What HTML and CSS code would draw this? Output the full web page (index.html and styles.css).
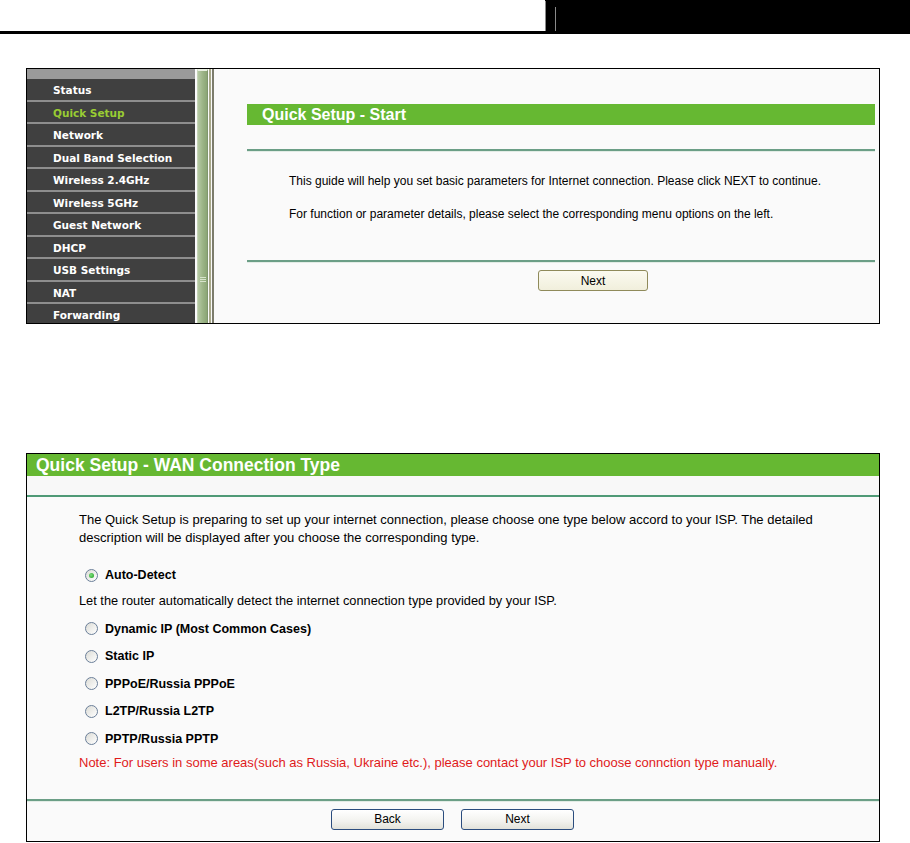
FILE: index.html
```html
<!DOCTYPE html>
<html lang="en">
<head>
    <meta charset="UTF-8">
    <title>Quick Setup</title>
    <link rel="stylesheet" href="styles.css">
</head>
<body>
    <div class="topbar">
        <div class="topbar-left"></div>
        <div class="topbar-right">
            <span class="tick tick-a"></span>
            <span class="tick tick-b"></span>
        </div>
    </div>

    <!-- screenshot 1: router web page -->
    <div class="frame frame-start">
        <ul class="menu">
            <li class="menu-top"></li>
            <li>Status</li>
            <li class="active">Quick Setup</li>
            <li>Network</li>
            <li>Dual Band Selection</li>
            <li>Wireless 2.4GHz</li>
            <li>Wireless 5GHz</li>
            <li>Guest Network</li>
            <li>DHCP</li>
            <li>USB Settings</li>
            <li>NAT</li>
            <li>Forwarding</li>
        </ul>
        <div class="scroll">
            <div class="scroll-thumb"><span class="grip"></span></div>
        </div>
        <div class="divider"></div>
        <div class="page">
            <div class="title-bar">Quick Setup - Start</div>
            <div class="rule rule-top"></div>
            <p class="guide first">This guide will help you set basic parameters for Internet connection. Please click NEXT to continue.</p>
            <p class="guide">For function or parameter details, please select the corresponding menu options on the left.</p>
            <div class="rule rule-bottom"></div>
            <div class="start-actions">
                <button class="btn btn-olive">Next</button>
            </div>
        </div>
    </div>

    <!-- screenshot 2: WAN connection type -->
    <div class="frame frame-wan">
        <div class="wan-title">Quick Setup - WAN Connection Type</div>
        <div class="wan-band"></div>
        <div class="wan-body">
            <p class="intro">The Quick Setup is preparing to set up your internet connection, please choose one type below accord to your ISP. The detailed description will be displayed after you choose the corresponding type.</p>
            <label class="opt first"><span class="radio checked"></span>Auto-Detect</label>
            <p class="hint">Let the router automatically detect the internet connection type provided by your ISP.</p>
            <label class="opt"><span class="radio"></span>Dynamic IP (Most Common Cases)</label>
            <label class="opt"><span class="radio"></span>Static IP</label>
            <label class="opt"><span class="radio"></span>PPPoE/Russia PPPoE</label>
            <label class="opt"><span class="radio"></span>L2TP/Russia L2TP</label>
            <label class="opt"><span class="radio"></span>PPTP/Russia PPTP</label>
            <p class="note">Note: For users in some areas(such as Russia, Ukraine etc.), please contact your ISP to choose connction type manually.</p>
        </div>
        <div class="rule rule-wan"></div>
        <div class="wan-actions">
            <button class="btn btn-blue">Back</button>
            <button class="btn btn-blue">Next</button>
        </div>
    </div>
</body>
</html>
```

FILE: styles.css
```css
body {
    margin: 0;
    background: #fff;
    font-family: "Liberation Sans", Arial, sans-serif;
    color: #000;
}

/* top bar */
.topbar {
    display: flex;
    height: 34px;
}
.topbar-left {
    flex: 1;
    border-bottom: 3px solid #000;
}
.topbar-right {
    width: 365px;
    background: #000;
    position: relative;
}
.tick {
    position: absolute;
    width: 1px;
    background: #8a8a8a;
    bottom: 3px;
}
.tick-a { left: 0; top: 1px; }
.tick-b { left: 10px; top: 7px; }

/* frames */
.frame {
    margin-left: 26px;
    width: 852px;
    border: 1px solid #000;
    background: #fafafa;
}
.frame-start {
    margin-top: 34px;
    height: 254px;
    display: flex;
    overflow: hidden;
}
.frame-wan {
    margin-top: 129px;
    height: 387px;
}

/* menu */
.menu {
    list-style: none;
    margin: 0;
    padding: 0;
    width: 168px;
    background: #404040;
    flex-shrink: 0;
}
.menu li {
    height: 20.5px;
    line-height: 22px;
    border-bottom: 2px solid #8e8e8e;
    padding-left: 26px;
    color: #fff;
    font-family: "DejaVu Sans", Verdana, sans-serif;
    font-weight: bold;
    font-size: 10.5px;
    white-space: nowrap;
}
.menu li.menu-top {
    height: 10px;
    border: none;
    background: #9a9a9a;
}
.menu li.active {
    color: #99cc33;
}

.scroll {
    width: 11px;
    margin-left: 2px;
    background: #fafafa;
    flex-shrink: 0;
}
.scroll-thumb {
    height: 100%;
    box-sizing: border-box;
    border-top: 2px solid #e8efe0;
    border-left: 1px solid #c5d4b8;
    border-right: 1px solid #7f966c;
    background: linear-gradient(to right, #b5c9a3, #9db588 50%, #8ba575);
    display: flex;
    align-items: flex-start;
    justify-content: center;
    padding-top: 206px;
}
.grip {
    width: 6px;
    height: 5px;
    background: repeating-linear-gradient(to bottom, #d8e4cc 0 1px, transparent 1px 2px);
}
.divider {
    width: 5px;
    margin-left: 1px;
    flex-shrink: 0;
    border-left: 2px solid #a9a98a;
    border-right: 2px solid #7c7c6c;
    box-sizing: border-box;
    background: #fafafa;
}

.page {
    flex: 1;
    padding: 35px 4px 0 33px;
}
.title-bar {
    height: 21px;
    line-height: 21px;
    background: #66b832;
    color: #fff;
    font-weight: bold;
    font-size: 16px;
    padding-left: 15px;
}
.rule {
    height: 1px;
    border-top: 2px solid #6b9e86;
    background: #e3ece6;
}
.rule-top { margin-top: 24px; }
.guide {
    margin: 0;
    font-size: 12px;
    line-height: 14px;
    padding-left: 42px;
}
.guide.first { margin-top: 22px; }
.guide + .guide { margin-top: 19px; }
.rule-bottom { margin-top: 39px; }
.start-actions {
    padding: 7px 0 0 291px;
}

/* buttons */
.btn {
    font-family: "Liberation Sans", Arial, sans-serif;
    font-size: 12px;
    color: #000;
    height: 21px;
    padding: 0;
    border-radius: 3px;
    cursor: pointer;
}
.btn-olive {
    width: 110px;
    border: 1px solid #8f8a5a;
    background: linear-gradient(#fbfaf0, #f1efdc);
}
.btn-blue {
    width: 113px;
    border: 1px solid #2b4d7e;
    background: linear-gradient(#ffffff, #f2f2ee 60%, #e2e2da);
}

/* WAN connection type */
.wan-title {
    height: 22px;
    line-height: 22px;
    background: #66b832;
    color: #fff;
    font-weight: bold;
    font-size: 17.5px;
    padding-left: 9px;
}
.wan-band {
    height: 19px;
    background: #f8f8f8;
}
.wan-body {
    padding: 0 0 0 52px;
    border-top: 2px solid #4f9a76;
    font-size: 13px;
}
.intro {
    margin: 14px 0 0;
    line-height: 18px;
    padding-right: 60px;
}
.opt {
    display: flex;
    align-items: center;
    height: 14px;
    margin-top: 13.5px;
    padding-left: 6px;
    font-weight: bold;
    font-size: 12.5px;
}
.opt.first { margin-top: 21px; }
.hint {
    margin: 12px 0 0;
    line-height: 14px;
    font-size: 12.8px;
}
.radio {
    width: 11px;
    height: 11px;
    border: 1px solid #6b7f99;
    border-radius: 50%;
    margin-right: 7px;
    background: linear-gradient(135deg, #dcdcd6, #ffffff);
    display: inline-flex;
    align-items: center;
    justify-content: center;
}
.radio.checked::after {
    content: "";
    width: 5px;
    height: 5px;
    border-radius: 50%;
    background: radial-gradient(circle at 40% 40%, #7de07d, #1d9a1d);
}
.note {
    margin: 10px 0 0;
    color: #e01b1b;
    line-height: 14px;
    font-size: 13px;
}
.rule-wan {
    margin-top: 29px;
}
.wan-actions {
    display: flex;
    gap: 17px;
    padding: 7px 0 0 304px;
}
```
